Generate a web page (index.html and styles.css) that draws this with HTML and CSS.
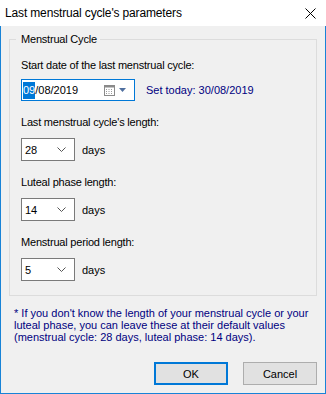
FILE: index.html
```html
<html>
  <head>
    <link rel="stylesheet" href="styles.css">
  </head>
  <body>
    <div class="window">
      <div class="titlebar">
        <span class="title">Last menstrual cycle's parameters</span>
        <svg class="close" width="11" height="11" viewBox="0 0 11 11">
          <path d="M0.5 0.5 L10.5 10.5 M10.5 0.5 L0.5 10.5" stroke="#000" stroke-width="1" fill="none" />
        </svg>
      </div>

      <fieldset class="group">
        <legend>Menstrual Cycle</legend>

        <div class="label first">Start date of the last menstrual cycle:</div>
        <div class="row">
          <div class="datebox">
            <span class="sel">09</span><span>/08/2019</span>
            <span class="spacer"></span>
            <svg class="cal" width="11" height="11" viewBox="0 0 11 11">
              <rect x="0.5" y="0.5" width="10" height="10" fill="#fff" stroke="#8a8a8a" />
              <rect x="0.5" y="0.5" width="10" height="2" fill="#8a8a8a" />
              <path d="M2 4h1v1H2zM4.5 4h1v1h-1zM7 4h1v1H7zM2 6h1v1H2zM4.5 6h1v1h-1zM7 6h1v1H7zM2 8h1v1H2zM4.5 8h1v1h-1zM7 8h1v1H7z" fill="#9a9a9a" />
            </svg>
            <svg class="drop" width="7" height="4" viewBox="0 0 7 4">
              <path d="M0 0 H7 L3.5 4 Z" fill="#4f6f9f" />
            </svg>
          </div>
          <span class="today">Set today: 30/08/2019</span>
        </div>

        <div class="label">Last menstrual cycle's length:</div>
        <div class="row">
          <div class="combo"><span>28</span><svg width="9" height="5" viewBox="0 0 9 5"><path d="M0.5 0.5 L4.5 4.5 L8.5 0.5" stroke="#555" fill="none" /></svg></div>
          <span class="unit">days</span>
        </div>

        <div class="label">Luteal phase length:</div>
        <div class="row">
          <div class="combo"><span>14</span><svg width="9" height="5" viewBox="0 0 9 5"><path d="M0.5 0.5 L4.5 4.5 L8.5 0.5" stroke="#555" fill="none" /></svg></div>
          <span class="unit">days</span>
        </div>

        <div class="label">Menstrual period length:</div>
        <div class="row">
          <div class="combo"><span>5</span><svg width="9" height="5" viewBox="0 0 9 5"><path d="M0.5 0.5 L4.5 4.5 L8.5 0.5" stroke="#555" fill="none" /></svg></div>
          <span class="unit">days</span>
        </div>
      </fieldset>

      <p class="note">* If you don't know the length of your menstrual cycle or your luteal phase, you can leave these at their default values (menstrual cycle: 28 days, luteal phase: 14 days).</p>

      <div class="buttons">
        <button class="btn default">OK</button>
        <button class="btn">Cancel</button>
      </div>
    </div>
  </body>
</html>
```

FILE: styles.css
```css
body,
html {
  margin: 0;
  width: 326px;
  height: 394px;
}
* {
  box-sizing: border-box;
}
body {
  font-family: 'Liberation Sans', Arial, sans-serif;
  font-size: 11px;
  color: #000;
}
.window {
  width: 326px;
  height: 394px;
  background-color: #f0f0f0;
  border-left: 1px solid #1883d7;
  border-right: 1px solid #1883d7;
  border-bottom: 1px solid #1883d7;
  display: flex;
  flex-direction: column;
}
.titlebar {
  height: 26px;
  margin-left: -1px;
  margin-right: -1px;
  background-color: #fff;
  display: flex;
  align-items: center;
  justify-content: space-between;
  padding: 0 10px 0 5px;
}
.title {
  font-size: 12px;
  letter-spacing: -0.15px;
}
.close {
  margin-top: 1px;
}

.group {
  margin: 6px 8px 0 8px;
  padding: 0 11px 14px 11px;
  border: 1px solid #dcdcdc;
  min-width: 0;
}
.group legend {
  padding: 0 3px 0 5px;
  margin-left: -5px;
  line-height: 14px;
  font-size: 11px;
  letter-spacing: -0.2px;
}
.label {
  line-height: 14px;
  margin-top: 14px;
  margin-bottom: 9px;
  letter-spacing: -0.2px;
}
.label.first {
  margin-top: 12px;
  margin-bottom: 7px;
}
.row {
  display: flex;
  align-items: center;
}
.datebox {
  width: 114px;
  height: 22px;
  border: 1px solid #0078d7;
  background-color: #fff;
  display: flex;
  align-items: center;
  padding: 0 8px 0 1px;
}
.datebox .sel {
  background-color: #0078d7;
  color: #fff;
  line-height: 17px;
}
.spacer {
  flex: 1;
}
.cal {
  margin-right: 4px;
}
.today {
  margin-left: 11px;
  color: #000080;
}
.combo {
  width: 54px;
  height: 23px;
  border: 1px solid #7a7a7a;
  background-color: #fff;
  display: flex;
  align-items: center;
  justify-content: space-between;
  padding: 0 8px 0 3px;
}
.unit {
  margin-left: 7px;
}

.note {
  margin: 11px 8px 0 13px;
  line-height: 12px;
  color: #000080;
}

.buttons {
  margin-top: auto;
  margin-bottom: 8px;
  display: flex;
  justify-content: flex-end;
  gap: 15px;
  padding-right: 8px;
}
.btn {
  width: 74px;
  height: 23px;
  font-family: 'Liberation Sans', Arial, sans-serif;
  font-size: 11px;
  background-color: #e1e1e1;
  border: 1px solid #adadad;
  padding: 0;
}
.btn.default {
  border: 2px solid #0078d7;
}
```
